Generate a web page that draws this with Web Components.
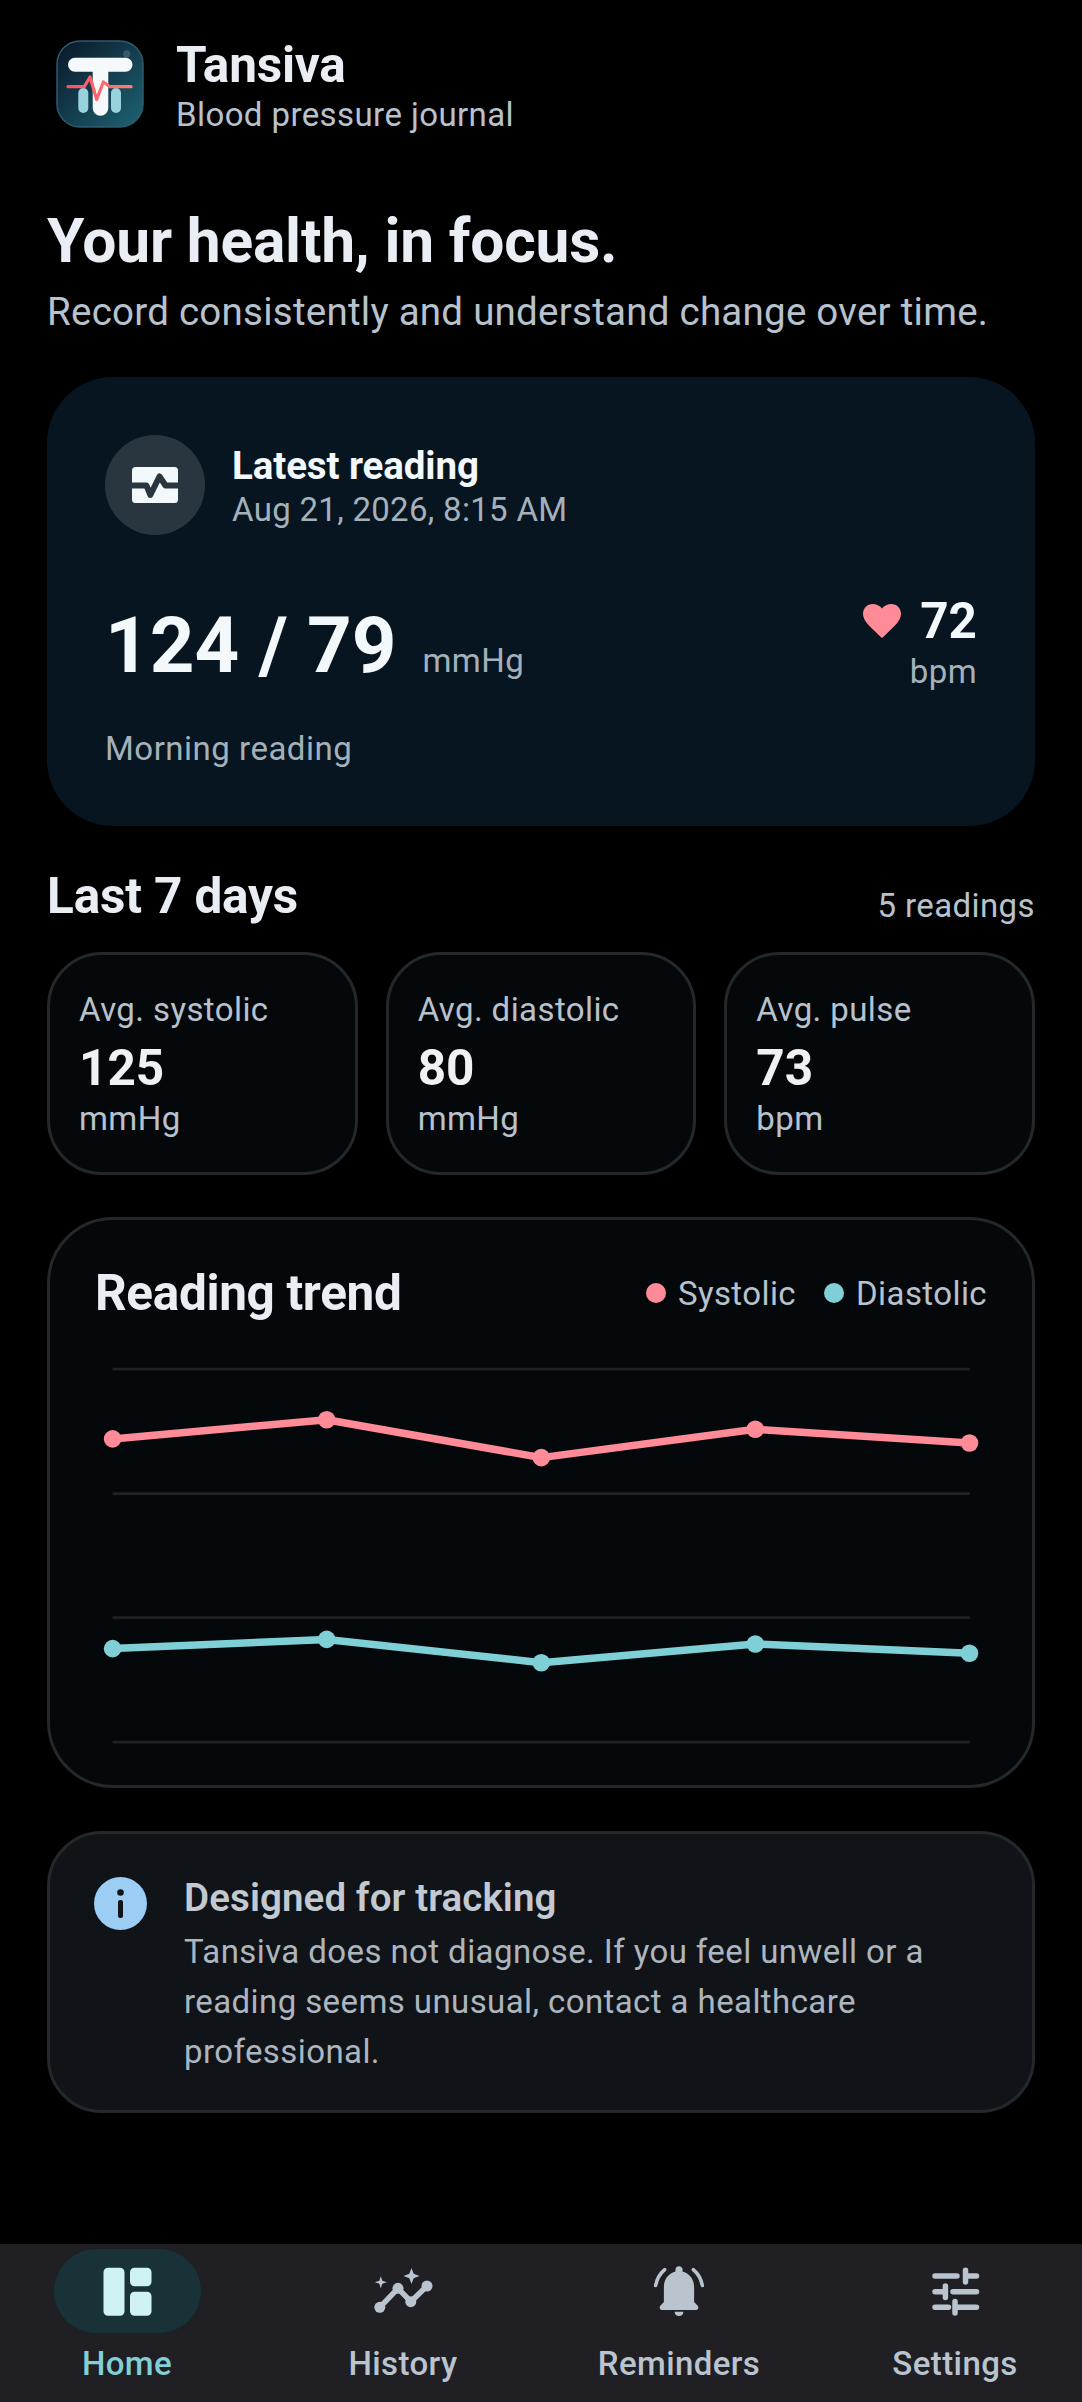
<!DOCTYPE html>
<html lang="en"><head><meta charset="utf-8"><title>Tansiva</title>
<style>
html,body{margin:0;padding:0;background:#000}
body{width:1082px;height:2402px;overflow:hidden;font-family:Roboto,"Liberation Sans",sans-serif;color:#e9edf4}
</style></head>
<body>
<tansiva-app>
  <app-header title="Tansiva" sub="Blood pressure journal"></app-header>
  <hero-intro title="Your health, in focus." sub="Record consistently and understand change over time."></hero-intro>
  <latest-card></latest-card>
  <section-head title="Last 7 days" meta="5 readings"></section-head>
  <stat-row>
    <stat-card label="Avg. systolic" value="125" unit="mmHg"></stat-card>
    <stat-card label="Avg. diastolic" value="80" unit="mmHg"></stat-card>
    <stat-card label="Avg. pulse" value="73" unit="bpm"></stat-card>
  </stat-row>
  <trend-card></trend-card>
  <info-card title="Designed for tracking">Tansiva does not diagnose. If you feel unwell or a reading seems unusual, contact a healthcare professional.</info-card>
  <bottom-nav slot="nav">
    <nav-item label="Home" active><svg viewBox="0 0 66 66" width="66" height="66" fill="#cff3f5"><rect x="9.5" y="9.7" width="21" height="48" rx="4.5"/><rect x="36" y="9.7" width="21.500" height="18.500" rx="4.500"/><rect x="36" y="33.700" width="21.500" height="24" rx="4.500"/></svg></nav-item>
    <nav-item label="History"><svg viewBox="0 0 66 66" width="66" height="66"><path d="M9.800 49.300 28 30.300 40.800 43.700 57 28" fill="none" stroke="#b9c4cf" stroke-width="5.500" stroke-linejoin="round"/><g fill="#b9c4cf"><circle cx="9.800" cy="49.300" r="5.500"/><circle cx="28" cy="30.300" r="5.500"/><circle cx="40.800" cy="43.700" r="5.500"/><circle cx="57" cy="28" r="5.500"/><path d="M41.500 10 43.700 15.800 49.500 18 43.700 20.200 41.500 26 39.300 20.200 33.500 18 39.300 15.800Z"/><path d="M10.800 18.300 12.300 22.800 16.800 24.300 12.300 25.800 10.800 30.300 9.300 25.800 4.800 24.300 9.300 22.800Z"/></g></svg></nav-item>
    <nav-item label="Reminders"><svg viewBox="0 0 24 24" width="66" height="66"><path fill="#b9c4cf" d="M12 3c-.8 0-1.300.6-1.300 1.300v.6C8 5.600 6.500 8 6.500 10.500V16l-1.300 1.400c-.5.5-.2 1.500.6 1.500h12.400c.8 0 1.100-1 .6-1.500L17.500 16v-5.500c0-2.500-1.500-4.900-4.200-5.600v-.6C13.300 3.600 12.800 3 12 3zM10.400 19.500h3.200c0 .9-.7 1.600-1.600 1.600s-1.600-.7-1.600-1.600z"/><path fill="none" stroke="#b9c4cf" stroke-width="1.300" stroke-linecap="round" d="M6.800 4.200C5 5.700 3.900 7.800 3.500 10M17.200 4.200c1.800 1.500 2.900 3.600 3.300 5.800"/></svg></nav-item>
    <nav-item label="Settings"><svg viewBox="0 0 66 66" width="66" height="66" fill="none" stroke="#b9c4cf" stroke-width="5.500" stroke-linecap="round"><path d="M13 18H35M43.500 12.300V24M43.500 18H54.500M13 33.700H23.400M23.400 28V39.500M31 33.700H54.500M13 49.300H26.500M33 43.500V55M33 49.300H54.500"/></svg></nav-item>
  </bottom-nav>
</tansiva-app>
<script>
function def(name, css, html){
  customElements.define(name, class extends HTMLElement{
    connectedCallback(){
      if(this.shadowRoot) return;
      const r=this.attachShadow({mode:'open'});
      const a=n=>this.getAttribute(n)||'';
      r.innerHTML='<style>'+css+'</style>'+(typeof html==='function'?html(a):html);
    }
  });
}
def('tansiva-app',
 ':host{display:flex;flex-direction:column;width:1082px;height:2402px;box-sizing:border-box}main{flex:1;padding:0 47px;display:flex;flex-direction:column}',
 '<main><slot></slot></main><slot name="nav"></slot>');
def('app-header',
 ':host{display:block;padding:36px 0 0 9px}.r{display:flex;align-items:flex-start;gap:32px}.t{font:700 49.500px/58px Roboto,sans-serif;letter-spacing:-.2px;color:#e9edf4}.s{font:400 33px/38px Roboto,sans-serif;letter-spacing:.41px;color:#b8c2cd;margin-top:2px}svg{display:block;flex:none;margin-top:4px}',
 a=>`<div class="r"><svg width="88" height="88" viewBox="0 0 88 88"><defs><linearGradient id="g" x1="0" y1="0" x2="1" y2="1"><stop offset="0" stop-color="#0a1728"/><stop offset="1" stop-color="#1d6373"/></linearGradient><linearGradient id="e" x1="0" y1="0" x2="1" y2="0"><stop offset="0" stop-color="#ff4f68"/><stop offset="1" stop-color="#ff7d72"/></linearGradient></defs><rect x="1" y="1" width="86" height="86" rx="23" fill="url(#g)" stroke="#2e5a6c" stroke-width="1.500"/><circle cx="70.700" cy="14" r="3.700" fill="#fff" fill-opacity=".16"/><rect x="22.300" y="48" width="10" height="25" rx="5" fill="#98d2dc"/><rect x="55" y="48" width="10" height="25" rx="5" fill="#98d2dc"/><path d="M19 17.700H69.500A7 7 0 0 1 69.500 31.700H52.300V68A7.800 7.800 0 0 1 36.700 68V31.700H19A7 7 0 0 1 19 17.700Z" fill="#f6f9fc"/><path d="M12 46.700H28.300L34 37 40.700 59.500 47.300 42 54 46.700H75" fill="none" stroke="url(#e)" stroke-width="3.200" stroke-linecap="round" stroke-linejoin="round"/></svg><div><div class="t">${a('title')}</div><div class="s">${a('sub')}</div></div></div>`);
def('hero-intro',
 ':host{display:block;padding-top:72px}.t{font:700 60.500px/71px Roboto,sans-serif;letter-spacing:-.2px;color:#e9edf4}.s{font:400 38.500px/45px Roboto,sans-serif;letter-spacing:.25px;color:#b8c2cd;margin-top:12px;white-space:nowrap}',
 a=>`<div class="t">${a('title')}</div><div class="s">${a('sub')}</div>`);
def('latest-card',
 `:host{display:block;margin-top:43px;background:#071520;border-radius:66px;padding:58px 58px 58.5px;color:#f3f8fb}
 .top{display:flex;align-items:center;gap:27px}
 .ic{width:100px;height:100px;border-radius:50%;background:#2a363f;display:flex;align-items:center;justify-content:center}
 .tx{padding-top:2.5px}
 .h{font:700 38.500px/45px Roboto,sans-serif;letter-spacing:-.1px}
 .d{font:400 33px/39px Roboto,sans-serif;letter-spacing:.3px;color:#a4b1bb;margin-top:2px}
 .main{display:flex;justify-content:space-between;align-items:flex-end;margin-top:57px}
 .bp{font:700 78px/90px Roboto,sans-serif;white-space:nowrap}
 .u{font:400 33px/39px Roboto,sans-serif;letter-spacing:.41px;color:#a4b1bb;margin-left:26px}
 .pulse{text-align:right}
 .p{display:flex;align-items:center;justify-content:flex-end;gap:19px;font:700 49.500px/58px Roboto,sans-serif}
 .b{font:400 33px/39px Roboto,sans-serif;letter-spacing:.41px;color:#a4b1bb;margin-top:1.5px}
 .n{font:400 33px/39px Roboto,sans-serif;letter-spacing:.5px;color:#a4b1bb;margin-top:38px}`,
 `<div class="top"><div class="ic"><svg width="46" height="36" viewBox="0 0 46 36"><rect width="46" height="36" rx="3.500" fill="#f3f8fb"/><path d="M0 18.500H14.500L18.300 28 27.500 9.500 33.500 18.500H46" fill="none" stroke="#2a363f" stroke-width="6" stroke-linejoin="round"/></svg></div><div class="tx"><div class="h">Latest reading</div><div class="d">Aug 21, 2026, 8:15 AM</div></div></div>
 <div class="main"><div class="bp">124 / 79<span class="u">mmHg</span></div><div class="pulse"><div class="p"><svg width="38" height="34" viewBox="0 0 38 34"><path fill="#ff8a98" d="M19 34 16.200 31.400C6.400 22.400 0 16.500 0 9.800 0 4.200 4.300 0 9.800 0 13 0 16.900 1.600 19 4.600 21.100 1.600 25 0 28.200 0 33.700 0 38 4.200 38 9.800 38 16.500 31.600 22.400 21.800 31.400Z"/></svg><span>72</span></div><div class="b">bpm</div></div></div>
 <div class="n">Morning reading</div>`);
def('section-head',
 ':host{display:flex;justify-content:space-between;align-items:flex-end;margin-top:41px}.t{font:700 49.500px/58px Roboto,sans-serif;letter-spacing:-.15px;color:#e9edf4}.m{font:400 33px/39px Roboto,sans-serif;letter-spacing:.41px;color:#b8c2cd}',
 a=>`<div class="t">${a('title')}</div><div class="m">${a('meta')}</div>`);
def('stat-row',':host{display:grid;grid-template-columns:repeat(3,1fr);gap:28px;margin-top:27px}','<slot></slot>');
def('stat-card',
 ':host{display:block;box-sizing:border-box;height:222.5px;background:#05080b;border:3px solid #23282d;border-radius:55px;padding:34.5px 29px 0}.l,.u{font:400 33px/39px Roboto,sans-serif;letter-spacing:.41px;color:#b8c2cd}.v{font:700 49.500px/55px Roboto,sans-serif;color:#eef2f7;margin:12px 0 3px}',
 a=>`<div class="l">${a('label')}</div><div class="v">${a('value')}</div><div class="u">${a('unit')}</div>`);
def('trend-card',
 `:host{display:block;box-sizing:border-box;height:571px;margin-top:42.5px;background:#05080b;border:3px solid #23282d;border-radius:66px;padding:44px 45px 43px}
 .h{display:flex;justify-content:space-between;align-items:center}
 .t{font:700 49.500px/58px Roboto,sans-serif;letter-spacing:-.35px;color:#e9edf4}
 .lg{display:flex;align-items:center;font:400 33px/39px Roboto,sans-serif;letter-spacing:.41px;color:#b8c2cd}
 .dot{width:20px;height:20px;border-radius:50%;margin-right:12px}
 .g{margin-left:28px}
 svg{display:block;margin-top:24px;overflow:visible}`,
 `<div class="h"><div class="t">Reading trend</div><div class="lg"><i class="dot" style="background:#ff8a98"></i><span>Systolic</span><i class="dot g" style="background:#7fd0d6"></i><span>Diastolic</span></div></div>
 <svg width="892" height="396" viewBox="95 1346 892 396"><g stroke="#1f2327" stroke-width="2.750"><path d="M112.600 1369H969.500M112.600 1493.600H969.500M112.600 1617.600H969.500M112.600 1742H969.500"/></g>
 <path d="M112.600 1438.900 326.700 1419.700 541.300 1457.600 755.300 1429.300 969.500 1443" fill="none" stroke="#ff8a98" stroke-width="7.500" stroke-linejoin="round"/>
 <g fill="#ff8a98"><circle cx="112.600" cy="1438.900" r="8.800"/><circle cx="326.700" cy="1419.700" r="8.800"/><circle cx="541.300" cy="1457.600" r="8.800"/><circle cx="755.300" cy="1429.300" r="8.800"/><circle cx="969.500" cy="1443" r="8.800"/></g>
 <path d="M112.600 1648.600 326.700 1639.400 541.300 1662.700 755.300 1644 969.500 1653.200" fill="none" stroke="#7fd0d6" stroke-width="7.500" stroke-linejoin="round"/>
 <g fill="#7fd0d6"><circle cx="112.600" cy="1648.600" r="8.800"/><circle cx="326.700" cy="1639.400" r="8.800"/><circle cx="541.300" cy="1662.700" r="8.800"/><circle cx="755.300" cy="1644" r="8.800"/><circle cx="969.500" cy="1653.200" r="8.800"/></g></svg>`);
def('info-card',
 `:host{display:flex;box-sizing:border-box;height:282px;margin-top:43px;background:#101418;border:3px solid #23282d;border-radius:55px;padding:40.5px 44px 0;gap:37px}
 svg{flex:none;margin-top:2.5px}
 .t{font:600 38.500px/45px Roboto,sans-serif;letter-spacing:.1px;color:#c2c9d1;margin-bottom:7px}
 .b{font:400 33px/50px Roboto,sans-serif;letter-spacing:.41px;color:#adb5bf}`,
 a=>`<svg width="53" height="53" viewBox="0 0 53 53"><circle cx="26.500" cy="26.500" r="26.500" fill="#9ccdf5"/><rect x="24" y="23" width="5" height="18" rx="2" fill="#101418"/><circle cx="26.500" cy="15.500" r="3.300" fill="#101418"/></svg><div><div class="t">${a('title')}</div><div class="b"><slot></slot></div></div>`);
def('bottom-nav',
 ':host{display:flex;justify-content:center;gap:56px;height:158px;box-sizing:border-box;background:#1f1f24;padding-top:5px}','<slot></slot>');
def('nav-item',
 `:host{display:flex;flex-direction:column;align-items:center;width:220px}
 .pill{width:147px;height:84px;border-radius:42px;display:flex;align-items:center;justify-content:center}
 :host([active]) .pill{background:#183237}
 .l{font:500 33px/39px Roboto,sans-serif;letter-spacing:.4px;color:#b9c4cf;margin-top:11px}
 :host([active]) .l{color:#82cfd6}
 ::slotted(svg){display:block}`,
 a=>`<div class="pill"><slot></slot></div><div class="l">${a('label')}</div>`);
</script>
</body></html>
